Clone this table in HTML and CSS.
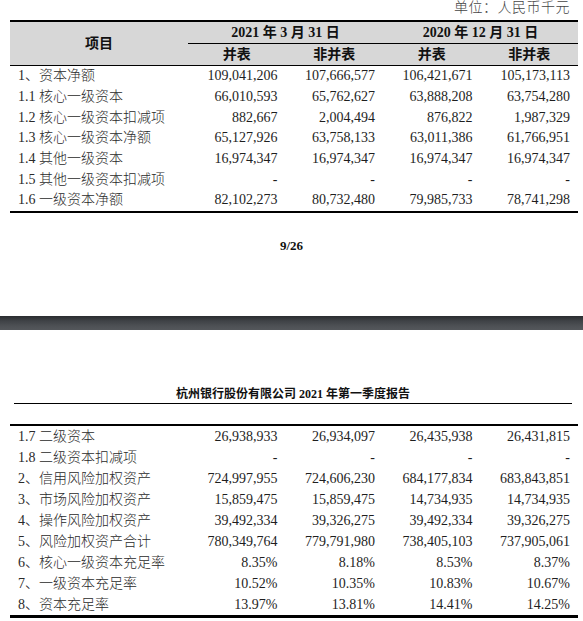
FILE: index.html
```html
<!DOCTYPE html>
<html lang="zh-CN">
<head>
<meta charset="utf-8">
<title>杭州银行股份有限公司 2021 年第一季度报告</title>
<link rel="stylesheet" href="styles.css">
</head>
<body>
<div class="page page-top">
  <div class="unit">单位：人民币千元</div>
  <table class="fin fin-head">
    <colgroup><col class="c-name"><col class="c-num"><col class="c-num"><col class="c-num"><col class="c-num"></colgroup>
    <thead>
      <tr class="h1">
        <th rowspan="2" class="h-item">项目</th>
        <th colspan="2" class="h-date">2021 年 3 月 31 日</th>
        <th colspan="2" class="h-date">2020 年 12 月 31 日</th>
      </tr>
      <tr class="h2">
        <th>并表</th><th>非并表</th><th>并表</th><th>非并表</th>
      </tr>
    </thead>
    <tbody>
      <tr><td>1、资本净额</td><td>109,041,206</td><td>107,666,577</td><td>106,421,671</td><td>105,173,113</td></tr>
      <tr><td>1.1 核心一级资本</td><td>66,010,593</td><td>65,762,627</td><td>63,888,208</td><td>63,754,280</td></tr>
      <tr><td>1.2 核心一级资本扣减项</td><td>882,667</td><td>2,004,494</td><td>876,822</td><td>1,987,329</td></tr>
      <tr><td>1.3 核心一级资本净额</td><td>65,127,926</td><td>63,758,133</td><td>63,011,386</td><td>61,766,951</td></tr>
      <tr><td>1.4 其他一级资本</td><td>16,974,347</td><td>16,974,347</td><td>16,974,347</td><td>16,974,347</td></tr>
      <tr><td>1.5 其他一级资本扣减项</td><td>-</td><td>-</td><td>-</td><td>-</td></tr>
      <tr><td>1.6 一级资本净额</td><td>82,102,273</td><td>80,732,480</td><td>79,985,733</td><td>78,741,298</td></tr>
    </tbody>
  </table>
  <div class="pageno">9/26</div>
</div>
<div class="band"></div>
<div class="page page-bottom">
  <div class="doc-title">杭州银行股份有限公司 2021 年第一季度报告</div>
  <table class="fin fin-cont">
    <colgroup><col class="c-name"><col class="c-num"><col class="c-num"><col class="c-num"><col class="c-num"></colgroup>
    <tbody>
      <tr><td>1.7 二级资本</td><td>26,938,933</td><td>26,934,097</td><td>26,435,938</td><td>26,431,815</td></tr>
      <tr><td>1.8 二级资本扣减项</td><td>-</td><td>-</td><td>-</td><td>-</td></tr>
      <tr><td>2、信用风险加权资产</td><td>724,997,955</td><td>724,606,230</td><td>684,177,834</td><td>683,843,851</td></tr>
      <tr><td>3、市场风险加权资产</td><td>15,859,475</td><td>15,859,475</td><td>14,734,935</td><td>14,734,935</td></tr>
      <tr><td>4、操作风险加权资产</td><td>39,492,334</td><td>39,326,275</td><td>39,492,334</td><td>39,326,275</td></tr>
      <tr><td>5、风险加权资产合计</td><td>780,349,764</td><td>779,791,980</td><td>738,405,103</td><td>737,905,061</td></tr>
      <tr><td>6、核心一级资本充足率</td><td>8.35%</td><td>8.18%</td><td>8.53%</td><td>8.37%</td></tr>
      <tr><td>7、一级资本充足率</td><td>10.52%</td><td>10.35%</td><td>10.83%</td><td>10.67%</td></tr>
      <tr><td>8、资本充足率</td><td>13.97%</td><td>13.81%</td><td>14.41%</td><td>14.25%</td></tr>
    </tbody>
  </table>
</div>
</body>
</html>
```

FILE: styles.css
```css
html, body {
  margin: 0;
  padding: 0;
  background: #ffffff;
}
body {
  width: 583px;
  height: 621px;
  overflow: hidden;
  font-family: "Liberation Serif", "Noto Sans CJK SC", serif;
  font-size: 14px;
  color: #1e1e1e;
}
.page {
  background: #ffffff;
}
.page-top {
  height: 316px;
  overflow: hidden;
}
.unit {
  height: 20px;
  line-height: 16px;
  text-align: right;
  padding-right: 13px;
  color: #444444;
  font-weight: 300;
  letter-spacing: 0.5px;
}
.fin {
  margin-left: 10px;
  width: 568px;
  table-layout: fixed;
  border-collapse: separate;
  border-spacing: 0;
}
.c-name { width: 178px; }
.c-num { width: 97.5px; }
.fin td {
  padding: 0 8px 0 0;
  height: 20.7px;
  line-height: 20px;
  text-align: right;
  white-space: nowrap;
  font-weight: 300;
}
.fin td:first-child {
  text-align: left;
  padding: 0 0 0 8px;
  color: #2a2a2a;
}
.fin-head {
  border-top: 2px solid #000000;
  border-bottom: 2px solid #000000;
}
.fin-head th {
  background: #d7d7d7;
  font-weight: bold;
  padding: 0;
  height: 21px;
  line-height: 20px;
  text-align: center;
  font-size: 14px;
  color: #111111;
}
.fin-head .h-date {
  border-bottom: 1px solid #000000;
}
.fin-head .h2 th,
.fin-head .h-item {
  border-bottom: 1px solid #000000;
}
.fin-head .h-item {
  padding-top: 1px;
}
.pageno {
  margin-top: 25px;
  text-align: center;
  font-weight: bold;
  font-size: 13px;
  line-height: 16px;
  color: #111111;
}
.band {
  height: 14px;
  background: linear-gradient(#2a2c2f 0%, #3f4246 35%, #4d5054 70%, #54575b 100%);
}
.page-bottom {
  padding-top: 56px;
}
.doc-title {
  margin: 0 11px 0 14px;
  text-align: center;
  font-weight: bold;
  font-size: 12px;
  line-height: 16px;
  padding-bottom: 1px;
  border-bottom: 1px solid #000000;
  color: #111111;
}
.fin-cont {
  margin-top: 20px;
  border-top: 2px solid #000000;
  border-bottom: 3px solid #000000;
}
.fin-cont td {
  height: 21px;
}
```
